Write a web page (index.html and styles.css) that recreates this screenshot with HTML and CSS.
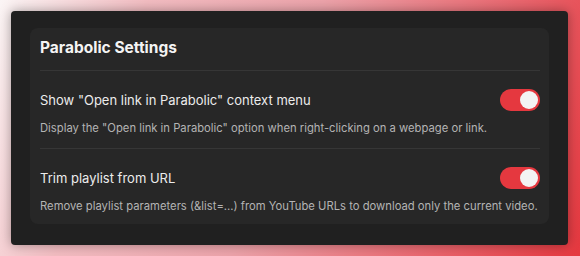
FILE: index.html
```html
<!DOCTYPE html>
<html>
<head>
<meta charset="utf-8">
<link rel="stylesheet" href="styles.css">
</head>
<body>
<div class="window">
  <div class="card">
    <div class="card-title">Parabolic Settings</div>
    <div class="row">
      <div class="row-main">
        <span class="row-label">Show "Open link in Parabolic" context menu</span>
        <span class="toggle"><span class="knob"></span></span>
      </div>
      <div class="row-desc">Display the "Open link in Parabolic" option when right-clicking on a webpage or link.</div>
    </div>
    <div class="row last">
      <div class="row-main">
        <span class="row-label">Trim playlist from URL</span>
        <span class="toggle"><span class="knob"></span></span>
      </div>
      <div class="row-desc">Remove playlist parameters (&amp;list=...) from YouTube URLs to download only the current video.</div>
    </div>
  </div>
</div>
</body>
</html>
```
FILE: styles.css
```css
* { box-sizing: border-box; }
html, body { margin: 0; height: 100%; }
body {
  width: 580px;
  height: 256px;
  overflow: hidden;
  background: linear-gradient(110deg, #fbf5f5 0%, #f2bcc1 22%, #eca3aa 48%, #e9646c 78%, #e5383f 100%);
  padding: 11px 12px 11px 11px;
  font-family: "Inter", "Open Sans", sans-serif;
}
.window {
  width: 557px;
  height: 234px;
  background: #202020;
  border-radius: 4px;
  padding: 17px 19px 21px 19px;
  box-shadow: 0 0 12px rgba(0,0,0,0.35);
}
.card {
  background: #272727;
  border-radius: 8px;
  padding: 0 9px 0 10px;
  height: 196px;
}
.card-title {
  padding: 8px 0 10px;
  line-height: 24px;
  font-size: 15.5px;
  font-weight: 700;
  color: #f4f4f4;
  border-bottom: 1px solid #363636;
}
.row {
  padding: 18px 0 12px;
  border-bottom: 1px solid #363636;
}
.row.last { border-bottom: none; padding-bottom: 0; }
.row-main {
  display: flex;
  align-items: center;
  justify-content: space-between;
  height: 22px;
}
.row-label {
  font-size: 13px;
  color: #ececec;
}
.row-desc {
  margin-top: 9px;
  line-height: 16px;
  font-size: 11.25px;
  color: #b4b4b4;
}
.toggle {
  width: 40px;
  height: 22px;
  border-radius: 11px;
  background: #e5383f;
  display: flex;
  align-items: center;
  justify-content: flex-end;
  padding-right: 2px;
}
.knob {
  width: 18px;
  height: 18px;
  border-radius: 50%;
  background: #f3f3f3;
}
```
